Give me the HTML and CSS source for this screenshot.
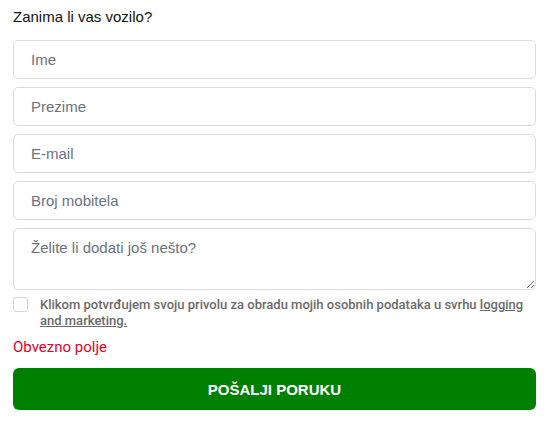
FILE: index.html
```html
<!DOCTYPE html>
<html lang="hr">
<head>
<meta charset="utf-8">
<link rel="stylesheet" href="styles.css">
</head>
<body>
<form class="form">
  <h2 class="title">Zanima li vas vozilo?</h2>
  <div class="fields">
    <input class="field" type="text" placeholder="Ime">
    <input class="field" type="text" placeholder="Prezime">
    <input class="field" type="email" placeholder="E-mail">
    <input class="field" type="tel" placeholder="Broj mobitela">
    <textarea class="field area" placeholder="Želite li dodati još nešto?"></textarea>
  </div>
  <label class="consent">
    <span class="box"></span>
    <span class="consent-text">Klikom potvrđujem svoju privolu za obradu mojih osobnih podataka u svrhu <a href="#">logging and marketing.</a></span>
  </label>
  <p class="error">Obvezno polje</p>
  <button class="submit" type="button">POŠALJI PORUKU</button>
</form>
</body>
</html>
```
FILE: styles.css
```css
html, body {
  margin: 0;
  padding: 0;
  background: #fff;
}
body {
  font-family: "Liberation Sans", Arial, sans-serif;
}
.form {
  padding: 8px 8px 0 13px;
  display: flex;
  flex-direction: column;
}
.title {
  margin: 0;
  font-size: 15px;
  font-weight: 400;
  color: #111;
  line-height: 18px;
}
.fields {
  margin-top: 14px;
  display: flex;
  flex-direction: column;
  gap: 8px;
}
.field {
  box-sizing: border-box;
  width: 100%;
  height: 39px;
  margin: 0;
  padding: 0 17px;
  border: 1px solid #dcdcdc;
  border-radius: 5px;
  font-family: "Liberation Sans", Arial, sans-serif;
  font-size: 15px;
  color: #333;
  background: #fff;
  outline: none;
}
.field::placeholder {
  color: #6b7280;
}
.area {
  height: 62px;
  padding: 10px 17px;
  resize: vertical;
  line-height: 18px;
}
.consent {
  margin-top: 7px;
  display: flex;
  gap: 12px;
  align-items: flex-start;
}
.box {
  flex: none;
  box-sizing: border-box;
  width: 15px;
  height: 15px;
  border: 1px solid #d4d4d4;
  border-radius: 3px;
  background: #fff;
}
.consent-text {
  font-family: Roboto, "Liberation Sans", sans-serif;
  font-weight: 500;
  font-size: 13px;
  line-height: 16px;
  color: #6a6a6a;
}
.consent-text a {
  color: #6a6a6a;
  text-decoration: underline;
}
.error {
  margin: 9px 0 0;
  font-family: Roboto, "Liberation Sans", sans-serif;
  font-size: 15px;
  line-height: 18px;
  color: #e6002d;
}
.submit {
  margin-top: 12px;
  height: 42px;
  width: 100%;
  border: none;
  border-radius: 6px;
  background: #008000;
  color: #fff;
  font-family: "Liberation Sans", Arial, sans-serif;
  font-weight: 700;
  font-size: 15px;
}
```
